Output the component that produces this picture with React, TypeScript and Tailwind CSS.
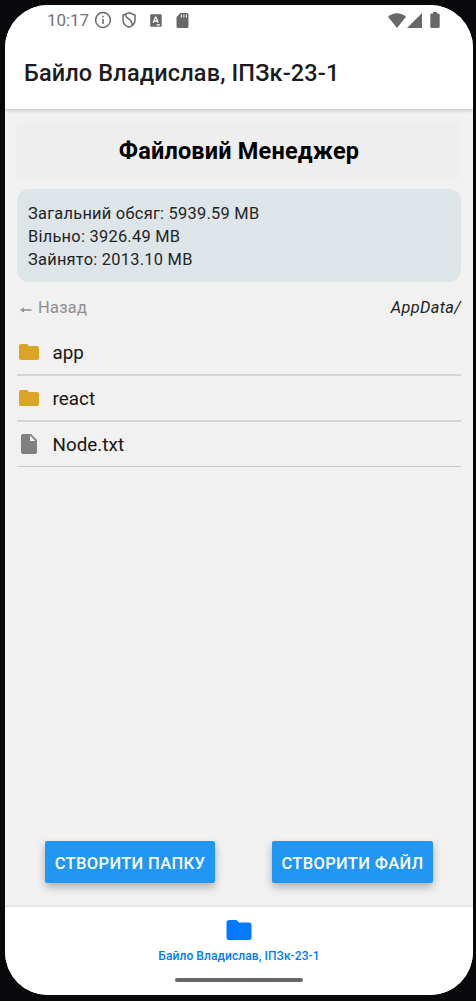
import React from 'react';

const FOLDER = 'M10 4H4C2.89 4 2 4.89 2 6v12a2 2 0 0 0 2 2h16a2 2 0 0 0 2-2V8c0-1.11-.9-2-2-2h-8l-2-2Z';
const FILE = 'M13 9V3.5L18.5 9M6 2C4.89 2 4 2.89 4 4v16a2 2 0 0 0 2 2h12a2 2 0 0 0 2-2V8l-6-6H6Z';

function Glyph({ d, className }: { d: string; className: string }) {
  return (
    <svg viewBox="0 0 24 24" className={`shrink-0 fill-current ${className}`} aria-hidden="true">
      <path d={d} />
    </svg>
  );
}

function StatusBar() {
  return (
    <div className="flex h-[30px] items-center pl-[42px] pr-[33px] text-[#686868]">
      <span className="w-[45px] text-[17px] leading-none tracking-[-0.1px] whitespace-nowrap text-[#747474]">10:17</span>
      <svg viewBox="0 0 18 18" className="ml-[2px] size-[18px]" fill="none" stroke="currentColor" strokeWidth="1.5">
        <circle cx="9" cy="9" r="7.4" />
        <path d="M9 8v5M9 4.8v1.6" />
      </svg>
      <svg viewBox="0 0 16 18" className="ml-[9px] h-[18px] w-[16px]" fill="none" stroke="currentColor" strokeWidth="1.5">
        <path d="M8 1.8 14 4v4.7c0 3.5-2.5 6.3-6 7.5-3.5-1.2-6-4-6-7.5V4l6-2.2Z" />
        <path d="M4.5 3.3c-.5 4.700 7.500 4 6.500 10.700" />
      </svg>
      <svg viewBox="0 0 12 13" className="ml-[13px] h-[13px] w-[12px]">
        <rect width="11.5" height="12.5" x=".2" y=".2" rx="1" fill="currentColor" />
        <path d="M3.2 8.7 5.4 3.2h.6l2.2 5.5M4 7h3.4M6.5 10.9h3.5" fill="none" stroke="white" strokeWidth="1.3" />
      </svg>
      <svg viewBox="0 0 13 15" className="ml-[14px] h-[15px] w-[13px]">
        <path d="M4.5 0H11a1.5 1.5 0 0 1 1.5 1.5v12A1.5 1.5 0 0 1 11 15H2a1.5 1.5 0 0 1-1.5-1.5V4l4-4Z" fill="currentColor" />
        <path d="M5.3 1.5v3M7.9 1.5v3M10.4 1.5v3" stroke="white" strokeWidth="1" />
      </svg>
      <svg viewBox="0 0 18 15" className="ml-auto h-[15px] w-[18px] fill-current">
        <path d="M0 3.8C4.8-1 13.2-1 18 3.8L9 15 0 3.8Z" />
      </svg>
      <svg viewBox="0 0 15 15" className="ml-[1px] h-[15px] w-[15px] fill-current">
        <path d="M15 0v15H0L15 0Z" />
      </svg>
      <svg viewBox="0 0 10 16" className="ml-[8px] h-[16px] w-[10px] fill-current">
        <path d="M3 0h4v1.5h1.5q1.2 0 1.2 1.2v12q0 1.3-1.2 1.3h-7Q.3 16 .3 14.7v-12q0-1.2 1.2-1.2H3V0Z" />
      </svg>
    </div>
  );
}

const entries = [
  { name: 'app', folder: true },
  { name: 'react', folder: true },
  { name: 'Node.txt', folder: false },
];

export default function App() {
  return (
    <div className="h-[1001px] w-[476px] overflow-hidden bg-[#09090b] pt-[5px] pl-[5px] font-[Roboto,sans-serif]">
      <div className="flex h-[990px] w-[468px] flex-col overflow-hidden rounded-[43px] bg-[#f1f1f1]">
        <header className="z-10 h-[104px] shrink-0 bg-white shadow-[0_1px_4px_rgba(0,0,0,0.22)]">
          <StatusBar />
          <h1 className="pt-[22px] pl-[19px] text-[23.5px] leading-[33px] font-medium tracking-[0.14px] whitespace-nowrap text-[#1c1c1e]">
            Байло Владислав, ІПЗк-23-1
          </h1>
        </header>

        <main className="flex flex-1 flex-col px-[12px] pt-[13px]">
          <h2 className="flex h-[56px] items-center justify-center bg-[#eeeeee] pt-[4px] text-[23.5px] font-bold tracking-[0.18px] whitespace-nowrap text-black">
            Файловий Менеджер
          </h2>
          <section className="mt-[11px] h-[93px] rounded-[12px] bg-[#dee5e9] px-[11px] pt-[13px] text-[16.4px] leading-[23px] tracking-[0.26px] text-[#222425]">
            <p>Загальний обсяг: 5939.59 MB</p>
            <p>Вільно: 3926.49 MB</p>
            <p>Зайнято: 2013.10 MB</p>
          </section>
          <div className="mt-[12px] flex h-[27px] items-center justify-between pt-[2px] text-[16.4px] tracking-[0.3px]">
            <button className="flex items-center text-[#8f8f8f]">
              <svg viewBox="0 0 12 6" className="mt-[4px] mr-[6px] ml-[3px] h-[6px] w-[12px] fill-current">
                <path d="M0 3 4 .5v1.7h7.5v1.6H4v1.7L0 3Z" />
              </svg>
              Назад
            </button>
            <span className="text-[#222222] italic">AppData/</span>
          </div>
          <ul className="mt-[9px]">
            {entries.map((e) => (
              <li key={e.name} className="flex h-[46px] items-center border-b-2 border-[#d4d4d4] text-[18.8px] tracking-[0.05px] text-[#161616] last:h-[45px] last:border-b last:border-[#c9c9c9]">
                <Glyph d={e.folder ? FOLDER : FILE} className={e.folder ? 'mr-[12px] -ml-[0.5px] size-[24px] text-[#daa425]' : 'mr-[12px] -ml-[0.5px] size-[24px] text-[#808080]'} />
                <span className="pt-[3px]">{e.name}</span>
              </li>
            ))}
          </ul>
          <div className="mt-auto mb-[24px] flex pl-[28px]">
            <button className="h-[42px] w-[170px] rounded-[2px] bg-[#2196f3] pt-[4px] text-[16.5px] font-medium tracking-[0.36px] whitespace-nowrap text-white shadow-[0_4px_8px_rgba(0,0,0,0.28)]">
              СТВОРИТИ ПАПКУ
            </button>
            <button className="ml-[57px] h-[42px] w-[161px] rounded-[2px] bg-[#2196f3] pt-[4px] text-[16.5px] font-medium tracking-[0.36px] whitespace-nowrap text-white shadow-[0_4px_8px_rgba(0,0,0,0.28)]">
              СТВОРИТИ ФАЙЛ
            </button>
          </div>
        </main>

        <nav className="flex h-[88px] shrink-0 flex-col items-center bg-white pt-[8px] text-[#007aff] shadow-[0_-1px_2px_rgba(0,0,0,0.1)]">
          <Glyph d={FOLDER} className="size-[30px]" />
          <span className="mt-[3px] text-[12px] leading-[16px] font-medium tracking-[0.08px] whitespace-nowrap">Байло Владислав, ІПЗк-23-1</span>
          <div className="mt-[14px] h-[4px] w-[128px] rounded-full bg-[#686868]" />
        </nav>
      </div>
    </div>
  );
}
